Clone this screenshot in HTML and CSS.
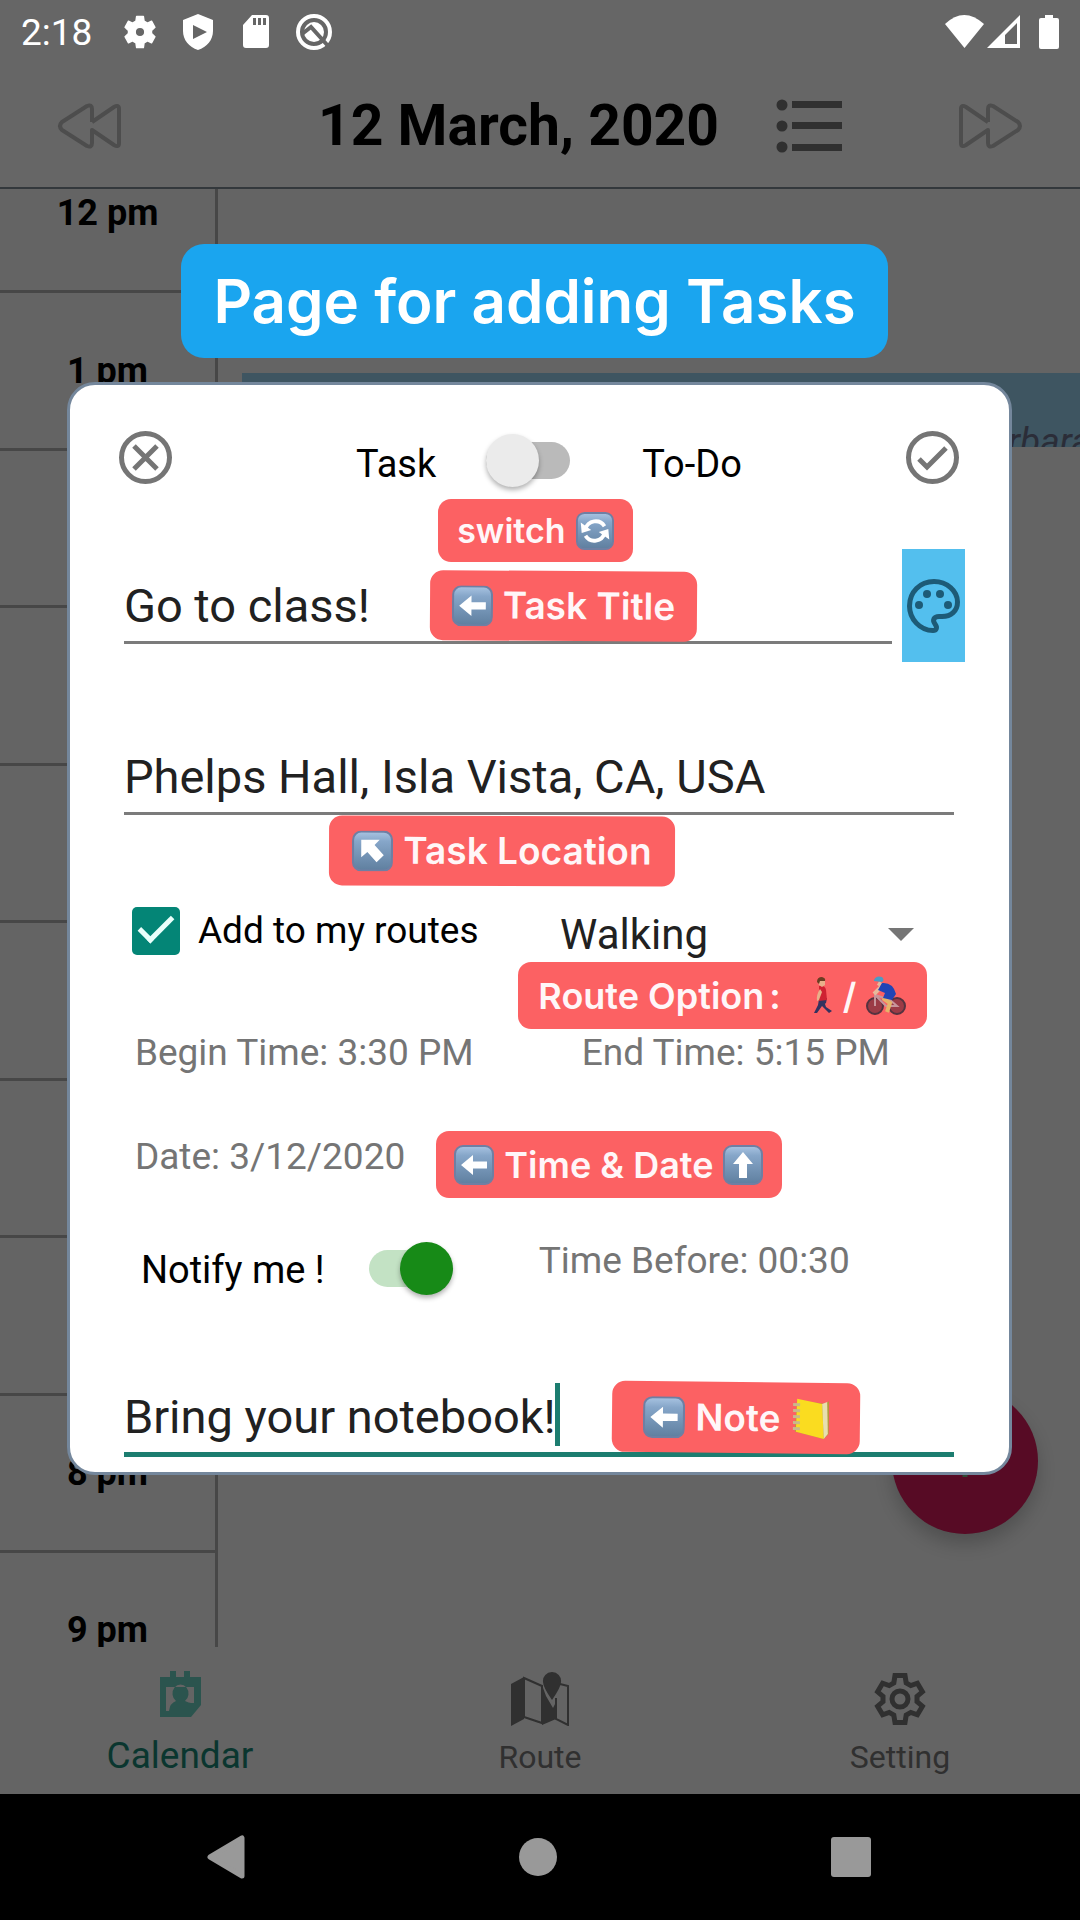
FILE: index.html
```html
<!DOCTYPE html>
<html lang="en">
<head>
<meta charset="utf-8">
<meta name="viewport" content="width=device-width, initial-scale=1">
<title>Add task</title>
<link rel="stylesheet" href="styles.css">
</head>
<body>
<svg class="sprite" aria-hidden="true">
  <defs>
    <linearGradient id="key-fill" x1="0" y1="0" x2="0" y2="1">
      <stop offset="0" stop-color="#a9c4e2"/>
      <stop offset="0.25" stop-color="#86a6c9"/>
      <stop offset="1" stop-color="#5f7f9f"/>
    </linearGradient>
    <symbol id="key" viewBox="0 0 40 40">
      <rect x="1" y="1" width="38" height="38" rx="8" fill="url(#key-fill)" stroke="#6f7fa3" stroke-width="2"/>
    </symbol>
    <symbol id="key-left" viewBox="0 0 40 40">
      <use href="#key"/>
      <path d="M7 20 19 10v6.500h14v7H19V30z" fill="#fff"/>
    </symbol>
  </defs>
</svg>

<header class="status">
  <span class="status-time">2:18</span>
  <svg class="gear" viewBox="-25 -25 50 50" width="34" height="34"><path fill="#fff" fill-rule="evenodd" stroke="#fff" stroke-width="2" stroke-linejoin="round" d="M-6-16-5-23H5L6-16 11-13 17-16 22-7 17-2V2L22 7 17 16 11 13 6 16 5 23H-5L-6 16-11 13-17 16-22 7-17 2V-2L-22-7-17-16-11-13zM0-7a7 7 0 1 0 0 14a7 7 0 1 0 0-14z"/></svg>
  <svg class="shield" viewBox="0 0 30 36" width="30" height="36"><path fill="#fff" fill-rule="evenodd" d="M15 0 30 6V17C30 26 24 33 15 36 6 33 0 26 0 17V6zM10 11V25L24 18z"/></svg>
  <svg class="sd" viewBox="0 0 26 33" width="26" height="33"><path fill="#fff" fill-rule="evenodd" d="M9 0H23a3 3 0 0 1 3 3V30a3 3 0 0 1-3 3H3a3 3 0 0 1-3-3V10zM10 3V10H13V3zM15 3V10H18V3zM20 3V10H23V3z"/></svg>
  <svg class="q" viewBox="0 0 36 36" width="36" height="36"><circle cx="18" cy="18" r="16" fill="none" stroke="#fff" stroke-width="4"/><circle cx="18" cy="18" r="10" fill="#fff"/><path d="M6 20 15 13 33 33" fill="none" stroke="#666" stroke-width="4"/></svg>
  <svg class="wifi" viewBox="0 0 39 33" width="39" height="33"><path fill="#fff" d="M0 9Q19-9 39 9L19.500 33z"/></svg>
  <svg class="signal" viewBox="0 0 33 33" width="33" height="33"><path fill="#fff" fill-rule="evenodd" d="M33 0V33H0zM30 8 18 20V29H30z"/></svg>
  <svg class="battery" viewBox="0 0 20 34" width="20" height="34"><path fill="#fff" d="M6 0H14V3H18a2 2 0 0 1 2 2V32a2 2 0 0 1-2 2H2a2 2 0 0 1-2-2V5a2 2 0 0 1 2-2H6z"/></svg>
</header>

<div class="toolbar">
  <button class="icon-btn" aria-label="Previous day">
    <svg viewBox="0 0 64 46" width="64" height="46" fill="none" stroke="#4d4d4d" stroke-width="4" stroke-linejoin="round"><path d="M35 19V6Q35 1 30 3L5 19Q1 23 5 27L30 43Q35 45 35 40V27L57 42Q62 45 62 40V6Q62 1 57 4L35 19"/></svg>
  </button>
  <h1 class="date">12 March, 2020</h1>
  <button class="icon-btn list-btn" aria-label="List view">
    <svg viewBox="0 0 66 54" width="66" height="54" fill="#303030"><circle cx="6" cy="6" r="5.500"/><circle cx="6" cy="27" r="5.500"/><circle cx="6" cy="48" r="5.500"/><path d="M16 2H66V9H16zM16 23H66V30H16zM16 45H66V52H16z"/></svg>
  </button>
  <button class="icon-btn" aria-label="Next day">
    <svg viewBox="0 0 64 46" width="64" height="46" fill="none" stroke="#4d4d4d" stroke-width="4" stroke-linejoin="round"><path d="M29 19V6Q29 1 34 3L59 19Q63 23 59 27L34 43Q29 45 29 40V27L7 42Q2 45 2 40V6Q2 1 7 4L29 19"/></svg>
  </button>
</div>

<section class="calendar">
  <ol class="hours">
    <li>12 pm</li><li>1 pm</li><li>2 pm</li><li>3 pm</li><li>4 pm</li><li>5 pm</li><li>6 pm</li><li>7 pm</li><li>8 pm</li><li class="last">9 pm</li>
  </ol>
  <div class="day">
    <div class="event">Barbara</div>
  </div>
</section>

<button class="fab" aria-label="Add"><svg viewBox="0 0 32 32" width="32" height="32"><path d="M16 0V32M0 16H32" stroke="#2f4a35" stroke-width="5"/></svg></button>

<nav class="tabs">
  <a class="tab active" href="#calendar">
    <svg viewBox="0 0 41 46" width="41" height="46"><path fill="#2b544e" fill-rule="evenodd" d="M0 6H10V0H16V6H24V0H30V6H41V34L31 46H0zM6 16V40H9Q10 32 16 30A8 9 0 1 1 25 30Q29 32 31 32H34V16z"/></svg>
    <span>Calendar</span>
  </a>
  <a class="tab" href="#route">
    <svg viewBox="0 0 60 54" width="60" height="54"><path d="M1 12 14 5V47L1 54z" fill="#303030"/><path d="M14 6 32 14V51L14 45zM50 12 58 14V53L46 47V26" fill="none" stroke="#303030" stroke-width="2"/><path d="M32 13 36 24 43 36 46 30V47L32 53z" fill="#303030"/><path d="M42 0a9 9 0 0 1 9 10Q51 15 42 28 33 15 33 10A9 9 0 0 1 42 0z" fill="#303030"/></svg>
    <span>Route</span>
  </a>
  <a class="tab" href="#setting">
    <svg viewBox="-27 -27 54 54" width="54" height="54" fill="none" stroke="#303030" stroke-width="5"><path d="M-6.200-16-5-23.500H5L6.200-16 10.800-13.400 17.400-15.800 22.400-7.200 17-2.600V2.600L22.400 7.200 17.400 15.800 10.800 13.400 6.200 16 5 23.500H-5L-6.200 16-10.800 13.400-17.400 15.800-22.400 7.200-17 2.600V-2.600L-22.400-7.200-17.400-15.800-10.800-13.400z"/><circle r="8"/></svg>
    <span>Setting</span>
  </a>
</nav>

<footer class="sysnav">
  <button class="icon-btn" aria-label="Back"><svg viewBox="0 0 38 44" width="38" height="44"><path d="M3 22 35 3V41z" fill="#999" stroke="#999" stroke-width="5" stroke-linejoin="round"/></svg></button>
  <button class="icon-btn" aria-label="Home"><svg viewBox="0 0 40 40" width="40" height="40"><circle cx="20" cy="20" r="19" fill="#999"/></svg></button>
  <button class="icon-btn" aria-label="Recent apps"><svg viewBox="0 0 40 40" width="40" height="40"><rect width="40" height="40" rx="3" fill="#999"/></svg></button>
</footer>

<div class="banner">Page for adding Tasks</div>

<div class="overlay">
  <form class="dialog" role="dialog" aria-label="Add task">
    <div class="row row-head">
      <button type="button" class="icon-btn" aria-label="Close"><svg viewBox="0 0 53 53" width="53" height="53" fill="none" stroke="#757575" stroke-width="5"><circle cx="26.500" cy="26.500" r="24"/><path d="M15 15 38 38M38 15 15 38"/></svg></button>
      <div class="kind">
        <label for="kind">Task</label>
        <input type="checkbox" role="switch" class="switch kind-switch" id="kind">
        <label for="kind">To-Do</label>
      </div>
      <button type="button" class="icon-btn" aria-label="Save"><svg viewBox="0 0 53 53" width="53" height="53" fill="none" stroke="#757575" stroke-width="5"><circle cx="26.500" cy="26.500" r="24"/><path d="M13 28 21 36 40 17"/></svg></button>
      <span class="hint hint-switch">switch <svg viewBox="0 0 40 40" width="38" height="38"><use href="#key"/><path d="M10 18a11 11 0 0 1 20-3M30 22a11 11 0 0 1-20 3" fill="none" stroke="#fff" stroke-width="4"/><path d="M5 11 6 22 16 19zM35 29 34 18 24 21z" fill="#fff"/></svg></span>
    </div>

    <div class="row row-title">
      <input class="field" type="text" value="Go to class!" aria-label="Task title">
      <button type="button" class="palette" aria-label="Colour"><svg viewBox="0 0 53 54" width="53" height="54"><path d="M27 2.500C40 2.500 50.500 12 50.500 23 50.500 32 44 37.500 35 37.500H32C27 37.500 25 41 28 45 31 49 29 51.500 26 51.500 13 51.500 2.500 40 2.500 27 2.500 13 13 2.500 27 2.500z" fill="none" stroke="#1d5b77" stroke-width="5"/><g fill="#1d5b77"><circle cx="12" cy="26" r="4"/><circle cx="20" cy="15" r="4"/><circle cx="33" cy="15" r="4"/><circle cx="41" cy="26" r="4"/></g></svg></button>
      <span class="hint hint-title"><svg viewBox="0 0 40 40" width="41" height="41"><use href="#key-left"/></svg> Task Title</span>
    </div>

    <div class="row row-location">
      <input class="field" type="text" value="Phelps Hall, Isla Vista, CA, USA" aria-label="Task location">
      <span class="hint hint-location"><svg viewBox="0 0 40 40" width="41" height="41"><use href="#key"/><path d="M9 9H27L22 14 31 24 24 31 15 21 9 26z" fill="#fff"/></svg> Task Location</span>
    </div>

    <div class="row row-options">
      <label class="routes"><input type="checkbox" class="tick" checked>Add to my routes</label>
      <div class="select">
        <select aria-label="Route option"><option>Walking</option><option>Biking</option></select>
        <svg viewBox="0 0 26 13" width="26" height="13"><path d="M0 0H26L13 13z" fill="#757575"/></svg>
      </div>
      <span class="hint hint-route">Route Option<span class="colon">:</span>
        <svg class="walker" viewBox="0 0 20 38" width="20" height="38"><path d="M6 22 14 21 13 26 9 29 4 36 1 36 5 28zM11 24 13 30 19 34 16 36 9 29z" fill="#34325f"/><path d="M6 9Q12 8 13 13L14 23 6 24z" fill="#cf2132"/><path d="M7 12Q3 18 4 24L6 23 9 15zM5 3H12L12 8 9 10 6 8z" fill="#e8b08a"/><path d="M4 5Q4 0 9 0 13 1 12 4L7 4 6 7z" fill="#6b3d22"/></svg>
        <span>/</span>
        <svg class="bike" viewBox="0 0 40 39" width="40" height="39"><g fill="#9b3b46" stroke="#55323f" stroke-width="2"><circle cx="9" cy="30" r="8"/><circle cx="31" cy="30" r="8"/></g><path d="M9 30 9 19 24 24 31 30H20L10 20" fill="none" stroke="#c8959b" stroke-width="2"/><path d="M17 22 24 27 21 36" fill="none" stroke="#e6b56a" stroke-width="4"/><path d="M15 11 8 18M12 7 15 9" fill="none" stroke="#e8b99c" stroke-width="4"/><path d="M16 7Q27 6 30 18L26 24 17 22 19 17 12 14z" fill="#2144b5"/><path d="M8 4Q10-1 16 1 19 4 16 6L8 5z" fill="#4c9bc4"/></svg>
      </span>
    </div>

    <div class="row row-times">
      <button type="button" class="link">Begin Time: 3:30 PM</button>
      <button type="button" class="link end">End Time: 5:15 PM</button>
    </div>

    <div class="row row-date">
      <button type="button" class="link">Date: 3/12/2020</button>
      <span class="hint hint-date"><svg viewBox="0 0 40 40" width="40" height="40"><use href="#key-left"/></svg> Time &amp; Date <svg viewBox="0 0 40 40" width="40" height="40"><use href="#key"/><path d="M20 7 30 19H24V33H16V19H10z" fill="#fff"/></svg></span>
    </div>

    <div class="row row-notify">
      <label for="notify">Notify me !</label>
      <input type="checkbox" role="switch" class="switch notify-switch" id="notify" checked>
      <button type="button" class="link before">Time Before: 00:30</button>
    </div>

    <div class="row row-note">
      <input class="field focused" type="text" value="Bring your notebook!" aria-label="Note">
      <i class="caret"></i>
      <span class="hint hint-note"><svg viewBox="0 0 40 40" width="42" height="42"><use href="#key-left"/></svg> Note <svg viewBox="0 0 38 42" width="38" height="42"><path d="M6 2 34 6 38 3V36L33 41 4 34z" fill="#b29a3c"/><path d="M6 1 31 6 33 41 5 34z" fill="#fadc20"/><path d="M31 6 36 4 37 36 33 41z" fill="#e8dfae"/><path d="M2 7H9M2 13H9M2 19H9M2 25H9M2 31H9" stroke="#c9b98a" stroke-width="3"/></svg></span>
    </div>
  </form>
</div>
</body>
</html>
```

FILE: styles.css
```css
* {
  box-sizing: border-box;
}

body {
  position: relative;
  display: flex;
  flex-direction: column;
  min-height: 100vh;
  margin: 0;
  overflow-x: hidden;
  background: #646464;
  color: #000;
  font: 37px/44px Roboto, sans-serif;
}

svg {
  display: block;
  flex: none;
}

button,
input,
select {
  margin: 0;
  padding: 0;
  border: 0;
  border-radius: 0;
  background: none;
  color: inherit;
  font: inherit;
}

.sprite {
  position: absolute;
  width: 0;
  height: 0;
}

.icon-btn {
  flex: none;
}

/* Status bar */
.status {
  display: flex;
  align-items: center;
  height: 63px;
  padding: 0 21px;
  background: #666;
  color: #fff;
}

.status-time {
  padding-top: 3px;
  font-size: 37px;
}

.gear { margin-left: 31px; }
.shield { margin-left: 26px; }
.sd { margin-left: 30px; }
.q { margin-left: 27px; }
.wifi { margin-left: auto; }
.signal { margin-left: 3px; }
.battery { margin-left: 19px; }

/* Date toolbar */
.toolbar {
  display: flex;
  align-items: center;
  height: 126px;
  padding: 2px 57px 0;
  border-bottom: 2px solid #33383c;
  background: #666;
}

.date {
  margin: 0 57px 0 auto;
  font-size: 57px;
  line-height: 68px;
}

.list-btn {
  margin-right: 117px;
}

/* Day grid */
.calendar {
  display: flex;
  flex: 1;
}

.hours {
  display: grid;
  flex: none;
  grid-template-rows: 104px repeat(8, 1fr) 94px;
  width: 218px;
  margin: 0;
  padding: 0;
  overflow: hidden;
  border-right: 3px solid #474747;
  list-style: none;
  font-size: 36px;
  font-weight: 700;
  text-align: center;
}

.hours li {
  display: flex;
  align-items: flex-end;
  justify-content: center;
  padding-bottom: 55px;
  border-bottom: 3px solid #474747;
}

.hours .last {
  align-items: flex-start;
  height: 94px;
  padding: 55px 0 0;
  overflow: hidden;
  border: 0;
}

.day {
  flex: 1;
  min-width: 0;
  padding: 184px 0 0 24px;
}

.event {
  height: 74px;
  overflow: hidden;
  padding: 47px 0 0 724px;
  background: #3e5561;
  color: #2b2d38;
  font-size: 37px;
  font-style: italic;
  white-space: nowrap;
}

.fab {
  position: absolute;
  right: 42px;
  bottom: 386px;
  display: flex;
  align-items: center;
  justify-content: center;
  width: 146px;
  height: 146px;
  border-radius: 50%;
  background: #570b25;
  box-shadow: 0 10px 18px rgba(0, 0, 0, 0.2);
}

/* Bottom tabs */
.tabs {
  display: grid;
  grid-template-columns: repeat(3, 1fr);
  height: 147px;
}

.tab {
  display: flex;
  flex-direction: column;
  align-items: center;
  justify-content: space-between;
  padding: 25px 0 15px;
  color: #303030;
  font-size: 32px;
  text-decoration: none;
}

.tab.active {
  padding: 24px 0 16px;
  color: #0a362f;
  font-size: 37px;
}

/* System navigation */
.sysnav {
  display: flex;
  align-items: center;
  justify-content: space-between;
  height: 126px;
  padding: 0 209px 0 207px;
  background: #000;
}

.banner {
  position: absolute;
  top: 244px;
  left: 181px;
  right: 192px;
  border-radius: 23px;
  background: #1aa5ef;
  color: #fff;
  font: 600 60px/114px Inter, sans-serif;
  text-align: center;
  white-space: nowrap;
}

/* Dialog */
.overlay {
  position: absolute;
  inset: 63px 1px 126px 0;
  display: flex;
  align-items: center;
  justify-content: center;
}

.dialog {
  width: 87.6%;
  padding-bottom: 15px;
  border: 3px solid #74879c;
  border-radius: 28px;
  background: #fff;
}

.row {
  position: relative;
  display: flex;
  align-items: center;
}

.row-head {
  justify-content: space-between;
  height: 146px;
  padding: 0 50px 2px 49px;
}

.kind {
  display: flex;
  align-items: center;
  padding: 6px 0 0 20px;
}

.kind,
.row-notify label {
  font-size: 38px;
}

.kind label {
  padding-top: 8px;
}

.kind-switch {
  margin: 0 72px 0 50px;
}

.row-title {
  align-items: flex-start;
  gap: 10px;
  margin-top: 18px;
  padding: 0 44px 0 54px;
}

.row-title .field {
  margin-top: 22px;
}

.row-location {
  margin-top: 80px;
  padding: 0 55px 0 54px;
}

.row-options {
  height: 75px;
  margin-top: 78px;
  padding: 0 95px 0 62px;
}

.row-times {
  margin-top: 63px;
  padding-left: 65px;
}

.row-date {
  margin-top: 60px;
  padding-left: 65px;
}

.row-notify {
  height: 62px;
  margin-top: 58px;
  padding-left: 71px;
}

.row-notify label {
  padding-top: 4px;
}

.row-note {
  margin-top: 83px;
  padding: 0 55px 0 54px;
}

.field {
  flex: 1;
  min-width: 0;
  height: 73px;
  padding: 0 0 2px;
  border-bottom: 3px solid #7b7b7b;
  color: #212121;
  font-size: 47px;
}

.field.focused {
  height: 75px;
  border-bottom: 5px solid #1c7d70;
}

.caret {
  position: absolute;
  top: 1px;
  left: 485px;
  width: 5px;
  height: 63px;
  background: #1c7d70;
}

.palette {
  display: flex;
  align-items: center;
  justify-content: center;
  width: 63px;
  height: 113px;
  background: #53bfee;
}

.routes {
  display: flex;
  align-items: center;
  gap: 18px;
  white-space: nowrap;
}

.tick {
  width: 48px;
  height: 48px;
  border-radius: 5px;
  appearance: none;
  background: #048576;
}

.tick::before {
  content: "";
  display: block;
  box-sizing: border-box;
  width: 34px;
  height: 18px;
  margin: 9px 0 0 7px;
  border: solid #eafffb;
  border-width: 0 0 5px 5px;
  rotate: -45deg;
}

.select {
  display: flex;
  align-items: center;
  margin-left: auto;
  padding-top: 8px;
  width: 354px;
}

.select select {
  flex: 1;
  width: 100%;
  appearance: none;
  color: #212121;
  font-size: 42px;
  line-height: 50px;
}

.link {
  color: #757575;
  white-space: nowrap;
}

.end {
  margin-left: 108px;
}

.before {
  margin: 0 0 15px 86px;
}

.switch {
  position: relative;
  width: 84px;
  height: 53px;
  appearance: none;
}

.switch::before {
  content: "";
  position: absolute;
  inset: 8px 0;
  border-radius: 19px;
  background: #bababa;
}

.switch::after {
  content: "";
  position: absolute;
  top: 0;
  left: 0;
  width: 53px;
  height: 53px;
  border-radius: 50%;
  background: #ebebeb;
  box-shadow: 0 3px 5px rgba(0, 0, 0, 0.3);
}

.switch:checked::before {
  background: #c3e2c4;
}

.switch:checked::after {
  right: 0;
  left: auto;
  background: #178a17;
}

.notify-switch {
  margin-left: 44px;
}

/* Callouts laid over the form */
.hint {
  position: absolute;
  display: flex;
  align-items: center;
  justify-content: center;
  gap: 10px;
  height: 67px;
  border-radius: 13px;
  background: #fc6163;
  color: #fff6f8;
  font: 600 37px/44px Inter, sans-serif;
  white-space: nowrap;
}

.hint-switch {
  top: 114px;
  left: 368px;
  width: 195px;
  height: 63px;
  font-size: 34px;
}

.hint-title {
  top: 22px;
  left: 360px;
  width: 267px;
  height: 70px;
  rotate: 0.4deg;
}

.hint-location {
  top: 74px;
  left: 259px;
  width: 346px;
  height: 70px;
  rotate: 0.2deg;
}

.hint-route {
  top: 69px;
  left: 448px;
  width: 409px;
  font-size: 36px;
}

.colon {
  margin: 0 22px 0 -5px;
}

.hint-date {
  top: -4px;
  left: 366px;
  width: 346px;
  font-size: 36px;
}

.hint-note {
  top: 0;
  left: 542px;
  width: 248px;
  height: 71px;
  rotate: 0.6deg;
}
```
